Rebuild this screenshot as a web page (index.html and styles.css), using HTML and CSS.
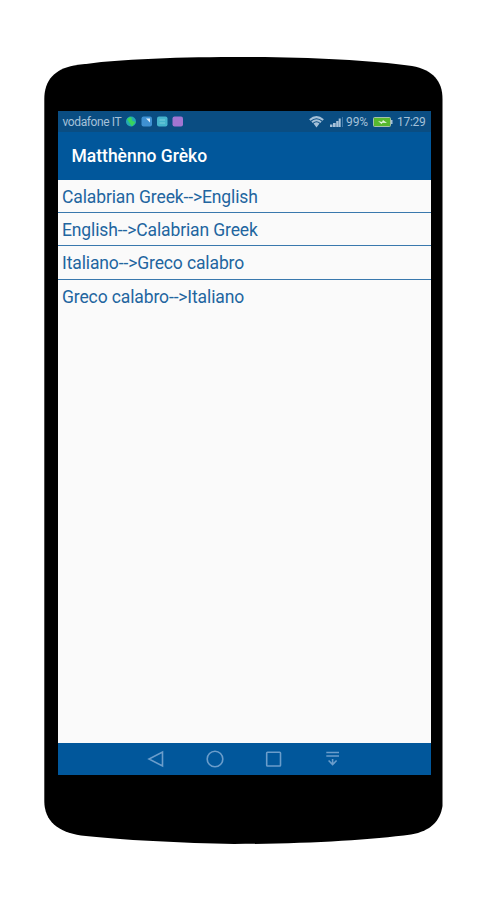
FILE: index.html
```html
<!DOCTYPE html>
<html lang="en">
<head>
    <meta charset="UTF-8">
    <meta name="viewport" content="width=device-width, initial-scale=1.0">
    <title>Matthènno Grèko</title>

    <link rel="stylesheet" href="styles.css">
</head>
<body>
    <div class="phone">
        <svg class="phone-shell" viewBox="0 0 399 787" width="399" height="787">
            <path d="M0.3 42 C0.3 23 11 12 30 8.5 C75 1.5 140 0 200 0 C260 0 325 3 368 9 C389 13 398.5 24 398.5 42 V749 C396 764 387 774 367 777.5 C325 783 260 787 190 787 C140 786 75 783 37 778.5 C14 775 0.3 764 0.3 744 Z" />
        </svg>

        <main class="screen">
            <div class="status-bar">
                <span class="carrier">vodafone IT</span>
                <svg class="notices" width="58" height="12" viewBox="0 0 58 12">
                    <circle cx="5" cy="5.5" r="5" fill="#25a9b4" />
                    <path d="M1 3 L5 0.8 L6.5 5 L9.5 6 L6 10.5 L3.5 7 Z" fill="#39d35e" />
                    <rect x="15.5" y="0.5" width="10.5" height="10" rx="2" fill="#3f91d2" />
                    <path d="M20 2.5 H24 V6.5 Z" fill="#e0effa" />
                    <rect x="31" y="0.5" width="10.5" height="10" rx="2" fill="#45b4cc" />
                    <path d="M33.5 4 H39 M33.5 7 H39" stroke="#79cedb" />
                    <rect x="46.5" y="0.5" width="10.5" height="10" rx="2" fill="#a175d2" />
                </svg>
                <svg class="wifi" width="15" height="12" viewBox="0 0 15 12">
                    <path d="M0.8 4 Q7.5 -1.8 14.2 4 M3 6.2 Q7.5 2.2 12 6.2" fill="none" stroke="#a5c1d9" stroke-width="2" />
                    <path d="M4.5 7.5 Q7.5 5 10.5 7.5 L7.5 11.5 Z" fill="#a5c1d9" />
                </svg>
                <svg class="signal" width="14" height="12" viewBox="0 0 14 12">
                    <path d="M0 8.5 H2.5 V11 H0 Z M3 7 H5.7 V11 H3 Z M6.2 5 H8.4 V11 H6.2 Z M8.7 2.5 H10.7 V11 H8.7 Z" fill="#a5c1d9" />
                    <path d="M12.5 1 V11" stroke="#447ba9" />
                </svg>
                <span class="percent">99%</span>
                <svg class="battery" width="20" height="12" viewBox="0 0 20 12">
                    <rect x="0.5" y="1.5" width="17" height="9" rx="1" fill="#57b82f" stroke="#a5c1a9" />
                    <rect x="18" y="4" width="1.5" height="4" fill="#a5c1d9" />
                    <path d="M5 5 L9 6 L10 4 L14 7 L9.5 6.7 L8.5 8 Z" fill="#e2f5dc" />
                </svg>
                <span class="clock">17:29</span>
            </div>

            <header class="title-bar">
                <h1>Matthènno Grèko</h1>
            </header>

            <ul class="dictionaries">
                <li>Calabrian Greek--&gt;English</li>
                <li>English--&gt;Calabrian Greek</li>
                <li>Italiano--&gt;Greco calabro</li>
                <li>Greco calabro--&gt;Italiano</li>
            </ul>

            <nav class="nav-bar">
                <svg width="18" height="18" viewBox="0 0 18 18">
                    <path d="M15.5 2 V16 L2 9 Z" />
                </svg>
                <svg width="18" height="18" viewBox="0 0 18 18">
                    <circle cx="9" cy="9" r="7.8" />
                </svg>
                <svg width="18" height="18" viewBox="0 0 18 18">
                    <rect x="1.7" y="2.2" width="13.8" height="13.8" rx="0.8" />
                </svg>
                <svg width="18" height="18" viewBox="0 0 18 18">
                    <path d="M2.3 2.5 H15 M2.3 6 H15 M8.6 9 V14 M4.6 10.5 L8.6 14.5 L12.6 10.5" />
                </svg>
            </nav>
        </main>
    </div>
</body>
</html>
```

FILE: styles.css
```css
* {
    box-sizing: border-box;
}

body {
    margin: 0;
    background-color: white;
    font-family: Roboto, "Liberation Sans", sans-serif;
}

.phone {
    position: relative;
    width: 399px;
    height: 787px;
    margin: 57px 0 0 44px;
    padding: 54px 12px 69px 13.5px;
}

.phone-shell {
    position: absolute;
    top: 0;
    left: 0;
    fill: black;
}

.screen {
    position: relative;
    display: flex;
    flex-direction: column;
    height: 664px;
    background-color: #fafafa;
}

.status-bar {
    display: flex;
    align-items: center;
    height: 21px;
    padding: 0 5px;
    background-color: #0a4d82;
    color: #a5c1d9;
    font-size: 12px;
}

.carrier {
    width: 63px;
    font-size: 12px;
    letter-spacing: -0.4px;
}

.wifi {
    margin-left: auto;
}

.signal {
    margin-left: 6px;
}

.percent {
    width: 24px;
    margin-left: 2px;
    letter-spacing: -0.1px;
}

.battery {
    margin-left: 3px;
}

.clock {
    width: 29px;
    margin-left: 4px;
    letter-spacing: -0.3px;
}

.title-bar {
    display: flex;
    align-items: center;
    height: 48px;
    padding-left: 14px;
    background-color: #01579b;
    color: white;
}

h1 {
    margin: 0;
    font-size: 17.5px;
    font-weight: 500;
}

.dictionaries {
    flex: 1;
    margin: 0;
    padding: 0;
    list-style: none;
}

.dictionaries li {
    height: 33.2px;
    padding-left: 4.5px;
    border-bottom: 1px solid #3978ad;
    color: #22659f;
    font-size: 17.5px;
    letter-spacing: -0.12px;
    line-height: 34px;
}

.dictionaries li:last-child {
    border-bottom: none;
}

.nav-bar {
    display: flex;
    align-items: center;
    gap: 41px;
    height: 32px;
    padding-left: 89px;
    background-color: #01579b;
}

.nav-bar svg {
    fill: none;
    stroke: #6b9dcb;
    stroke-width: 1.6;
}
```
